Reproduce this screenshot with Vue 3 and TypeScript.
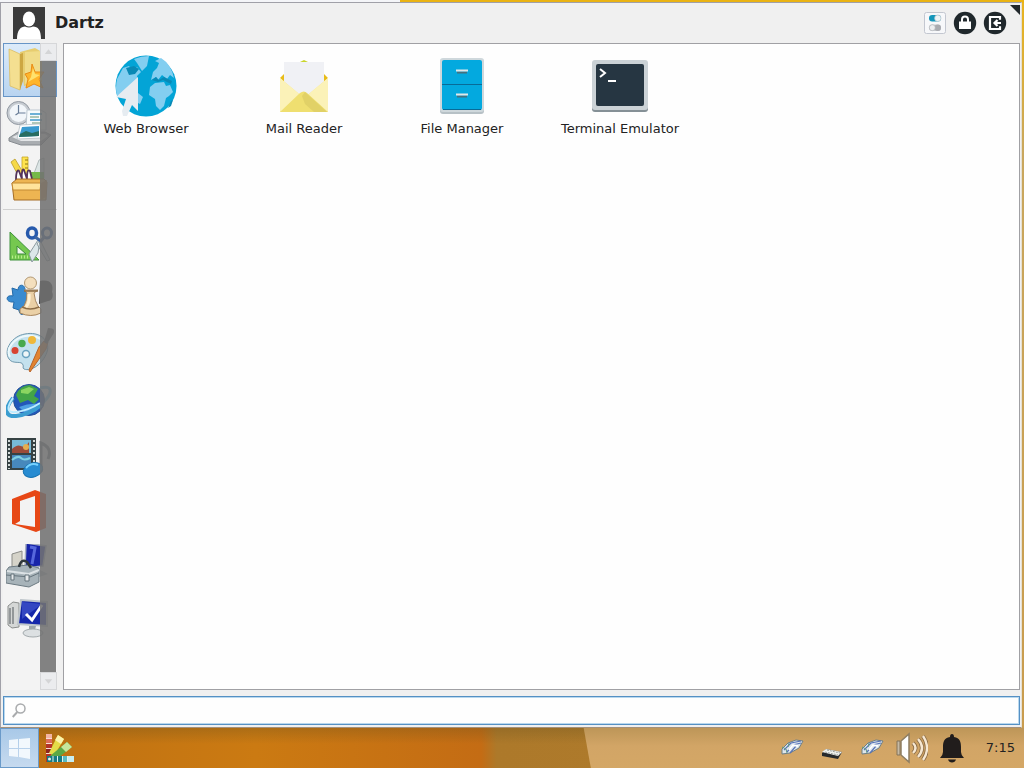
<script setup lang="ts">
import { ref } from 'vue'

const apps: { id: string; label: string }[] = [
  { id: 'web', label: 'Web Browser' },
  { id: 'mail', label: 'Mail Reader' },
  { id: 'files', label: 'File Manager' },
  { id: 'term', label: 'Terminal Emulator' },
]
const categories: { id: string; label: string }[] = [
  { id: 'favorites', label: 'Favorites' },
  { id: 'recent', label: 'Recently Used' },
  { id: 'all', label: 'All Applications' },
  { id: 'accessories', label: 'Accessories' },
  { id: 'games', label: 'Games' },
  { id: 'graphics', label: 'Graphics' },
  { id: 'internet', label: 'Internet' },
  { id: 'multimedia', label: 'Multimedia' },
  { id: 'office', label: 'Office' },
  { id: 'settings', label: 'Settings' },
  { id: 'system', label: 'System' },
]
const selected = ref('favorites')
const query = ref('')
</script>

<template>
  <div class="desktop">
    <section class="menu">
      <header class="head">
        <svg class="avatar" viewBox="0 0 32 32" aria-hidden="true">
          <rect width="32" height="32" fill="#3b3b3b" />
          <ellipse cx="16" cy="12" rx="6.2" ry="7.5" fill="#fff" />
          <path d="M4 32C4 23 8 19.500 12 19.500q4 2 8 0C25 19.500 28 23 28 32Z" fill="#fff" />
        </svg>
        <h1 class="user">Dartz</h1>
        <div class="actions">
          <button class="act" aria-label="Settings">
            <svg viewBox="0 0 24 24">
              <rect x="1.500" y="1.500" width="21" height="21" rx="2" fill="#f7f8fa" stroke="#c3c7d0" />
              <rect x="6" y="4" width="12" height="6.500" rx="3.200" fill="#1596ba" />
              <circle cx="14.800" cy="7.200" r="3.200" fill="#eef3f5" stroke="#a9bcc4" stroke-width=".6" />
              <rect x="6" y="13.500" width="12" height="6.500" rx="3.200" fill="#c9ccd0" />
              <circle cx="14.800" cy="16.700" r="3.200" fill="#a9abb0" />
              <circle cx="9.300" cy="16.700" r="3" fill="#eceef0" stroke="#a8abb0" stroke-width=".6" />
            </svg>
          </button>
          <button class="act" aria-label="Lock screen">
            <svg viewBox="0 0 24 24">
              <circle cx="12" cy="12" r="11.200" fill="#20282c" />
              <path d="M9 12V8.500a3 3 0 0 1 6 0V12" fill="none" stroke="#fff" stroke-width="2" />
              <rect x="6" y="10.500" width="12" height="7.500" fill="#fff" />
            </svg>
          </button>
          <button class="act" aria-label="Log out">
            <svg viewBox="0 0 24 24">
              <circle cx="12" cy="12" r="11.200" fill="#20282c" />
              <path d="M17 8.800V6H7v12h10v-2.800" fill="none" stroke="#fff" stroke-width="2.200" />
              <path d="M18 12h-6M14.500 9l-3 3 3 3" fill="none" stroke="#fff" stroke-width="2.200" />
            </svg>
          </button>
        </div>
        <svg class="grip" viewBox="0 0 10 10" aria-hidden="true"><path d="M0 0H10V10Z" fill="#22282c" /></svg>
      </header>

      <div class="main">
        <nav class="side" aria-label="Categories">
          <template v-for="c in categories" :key="c.id">
            <hr v-if="c.id === 'accessories'" class="rule" />
            <button class="cat" :class="{ on: selected === c.id }" :aria-label="c.label" @click="selected = c.id">
              <svg viewBox="0 0 48 48">
                <g v-if="c.id === 'favorites'">
                  <path d="M14 6 29 2l7 4v30l-18 4Z" fill="#e7cd70" />
                  <path d="M19 6 36 5v29l-17 4Z" fill="#f0dc8a" />
                  <path d="M3 3 14 8v36L4 40Z" fill="#f4df91" stroke="#d8b85a" stroke-width=".7" />
                  <path d="m14 8 3-1v28l-3 9Z" fill="#cda742" />
                  <path d="m26 18 3 8h9l-5 7 4 9-9-4-8 4 2-9-3-5 6-2Z" fill="#ffb52b" stroke="#e98b16" />
                  <path d="m27 22 2 6 5 1-5 3-7 4 3-5Z" fill="#ffe16d" />
                </g>
                <g v-else-if="c.id === 'recent'">
                  <circle cx="12.500" cy="13" r="11.500" fill="#c6cbd1" stroke="#9299a2" />
                  <circle cx="12.500" cy="13" r="9" fill="#f2f6fa" />
                  <path d="M12.500 5v8h7M12.500 13l-3 2" fill="none" stroke="#687d98" stroke-width="1.200" />
                  <path d="M21 10h14l5 3v17H20Z" fill="#f7fafc" stroke="#bcc7d0" />
                  <path d="M24 14h12M24 20h12" stroke="#6db0d6" stroke-width="2" />
                  <path d="M24 17h9M26 23h9" stroke="#6b9675" />
                  <path d="m3 38 9-6h27l6 3-10 10H15L3 41Z" fill="#a9adb1" stroke="#868b90" />
                  <path d="m6 37 7-3h26l3 2-7 5H15Z" fill="#e3e5e7" />
                  <path d="m14 25 20-1 1 14-24 1Z" fill="#fff" stroke="#aeb8c0" stroke-width=".7" />
                  <path d="m16 27 17-1v10l-20 1Z" fill="#3a9ad0" />
                  <path d="m14 34 6-3 6 2 7-2v5l-20 1Z" fill="#276d62" />
                </g>
                <g v-else-if="c.id === 'all'">
                  <path d="m5 8 4-3 9 15-5 3Z" fill="#f5d949" stroke="#ba9d2d" stroke-width=".8" />
                  <path d="M16 3h6v20h-6Z" fill="#ffe44f" stroke="#c4a523" stroke-width=".8" />
                  <path d="M19 6h3M19 10h3M19 14h3" stroke="#8b761b" />
                  <path d="m27 22 6-16 5-2v20Z" fill="#dce5e5" stroke="#97a4a4" stroke-width=".7" />
                  <path d="M23 18h15v7H23Z" fill="#75b949" />
                  <path d="M10 26c0-9 2-11 3-9l3 8c-1-7 1-11 2-9l3 9c0-8 1-10 3-8l2 8" fill="#fff" stroke="#53335a" stroke-width="1.800" />
                  <path d="m6 29 5-4h27l3 3-1 18H8Z" fill="#edb552" stroke="#a56d25" />
                  <path d="M6 29h29l-1 7H7Z" fill="#ffe39b" stroke="#c38b35" />
                  <path d="m35 29 6-3-1 17-5 3Z" fill="#d18d36" />
                </g>
                <g v-else-if="c.id === 'accessories'">
                  <path d="M4 12v28h29Z" fill="#75c84f" stroke="#3f923c" />
                  <path d="M11 26v8h9Z" fill="#eef5eb" stroke="#3b8a38" />
                  <path d="M6 37h22" stroke="#b6ee8b" stroke-width="3" stroke-dasharray="1 2" />
                  <path d="m32 20-9 14 3 8 6-9 2-13Zm2 0 10 20-3 1-10-17Z" fill="#dce7ea" stroke="#8b9a9f" />
                  <ellipse cx="26" cy="13" rx="4.500" ry="5" fill="none" stroke="#275aac" stroke-width="3.500" />
                  <ellipse cx="41" cy="13" rx="4.500" ry="5" fill="none" stroke="#275aac" stroke-width="3" />
                  <path d="m29 17 6 4 4-5" fill="none" stroke="#3c65a3" stroke-width="3" />
                </g>
                <g v-else-if="c.id === 'games'">
                  <path d="M34 7c10-2 14 3 12 11 2 4 0 9-4 9l-9 3Z" fill="#343536" />
                  <path d="m6 14 6 2c0-7 8-6 7 1l6 2v6c-5 0-5 5 0 4v7l-6-1c2 6-6 8-6 1l-6-2 1-6c-9 1-9-8-1-6Z" fill="#398bd0" stroke="#246aa9" />
                  <circle cx="24.500" cy="9" r="6" fill="#f4dfbd" stroke="#b29872" />
                  <path d="M18 16h14l-4 3q1 9 4 13l3 3v4q-10 5-21 0v-4l4-3q3-5 3-13Z" fill="#ead0a6" stroke="#a7865e" />
                  <path d="M18 17h14M16 33q8 4 17 0" fill="none" stroke="#8c6d47" stroke-width="1.500" />
                  <path d="M23 20q1 9-3 13" fill="none" stroke="#fff1d3" stroke-width="3" />
                </g>
                <g v-else-if="c.id === 'graphics'">
                  <path d="M17 37c-1-5-10 0-14-6C-3 22 6 8 19 6c14-3 26 6 22 18-4 12-16 20-23 17-2-1 0-3-1-4Z" fill="#c4e1ee" stroke="#7199ae" />
                  <path d="M4 29C-1 20 9 10 19 8c7-1 15 1 19 6" fill="none" stroke="#edf8fb" stroke-width="2" />
                  <circle cx="20" cy="26" r="3.500" fill="#eff6f8" stroke="#69a2c0" stroke-width="1.500" />
                  <circle cx="9" cy="22.500" r="3.500" fill="#d74332" /><circle cx="16" cy="15.500" r="3.700" fill="#48a94d" />
                  <circle cx="26" cy="12" r="4" fill="#efb83a" />
                  <path d="m24 44-1-2 10-23 5-6 4 1-2 7Z" fill="#e18431" stroke="#b7632a" />
                  <path d="m38 14 4-14q10 0 4 8l-5 8Z" fill="#606367" />
                </g>
                <g v-else-if="c.id === 'internet'">
                  <path d="M34 6q12-3 10 5-2 6-11 13" fill="none" stroke="#75c4e9" stroke-width="3" />
                  <circle cx="23" cy="18" r="15.500" fill="#2357b9" stroke="#265398" />
                  <path d="M10 13Q14 3 24 3l8 4-4 7 5 3-5 5-6-4-8 3Z" fill="#43a447" />
                  <path d="m15 8 8-3 5 2-6 5-7-1Z" fill="#8bd561" />
                  <path d="M13 25q10-4 20-3l-3 7-9 4Z" fill="#4e9fe3" />
                  <path d="M7 16C-2 27-1 35 10 34c8-1 18-5 25-11" fill="none" stroke="#3b9dd0" stroke-width="4" />
                  <path d="M7 16C0 26 1 31 10 30c8-1 15-3 24-9" fill="none" stroke="#bcebff" stroke-width="2" />
                </g>
                <g v-else-if="c.id === 'multimedia'">
                  <path d="M1 2h29v32H1Z" fill="#364244" />
                  <path d="M3 4v29M28 4v29" stroke="#d3dad9" stroke-width="2" stroke-dasharray="2 2" />
                  <path d="M6 4h19v13H6Z" fill="#77bad6" /><path d="M6 19h19v13H6Z" fill="#4788bc" />
                  <path d="M6 13q5-5 9-3t8-4v11H6Z" fill="#9b4b39" />
                  <circle cx="20" cy="11" r="3" fill="#e4ae50" />
                  <path d="M6 24q6-5 9-2t9 0" fill="none" stroke="#7fd0e2" stroke-width="2" />
                  <path d="M35 36V7q12 5 7 16" fill="none" stroke="#717d86" stroke-width="3" />
                  <ellipse cx="27" cy="34" rx="10" ry="7" transform="rotate(-20 27 34)" fill="#278bd1" stroke="#1773b2" />
                  <path d="M20 32q5-6 12-3" fill="none" stroke="#75d1ff" stroke-width="2" />
                </g>
                <g v-else-if="c.id === 'office'">
                  <path fill-rule="evenodd" d="M6 9 29 0l11 4v34l-10 4L6 34ZM14 11v20l-5 3 20 3V6Z" fill="#e74715" />
                </g>
                <g v-else-if="c.id === 'settings'">
                  <path d="m20-1 20 3-3 20-18 2Z" fill="#1724a9" stroke="#a8b1c2" stroke-width="1.500" />
                  <path d="m24 3 5 1-3 16" fill="none" stroke="#5668dc" stroke-width="3" />
                  <path d="m6 10 10-3v17H6Z" fill="#d5d3c9" stroke="#8b8c88" />
                  <path d="m30 24 12 6-9 3Z" fill="#b8c2cc" />
                  <path d="m3 23 19-2 11 3v14L23 43 0 39V27Z" fill="#a7b3b9" stroke="#6c7a82" />
                  <path d="m1 27 22 3 10-4" fill="none" stroke="#dce2e5" stroke-width="2" />
                  <path d="m0 31 24 2 9-4" fill="none" stroke="#66747c" />
                  <path d="M13 23q2-9 8-5l4 6" fill="none" stroke="#30383c" stroke-width="2.500" />
                  <path d="M5 30h3v6H5ZM19 31h4v6h-4Z" fill="#e5e8ea" stroke="#66747c" />
                </g>
                <g v-else>
                  <path d="m2 8 5-4 6 1v24l-7 1-4-3Z" fill="#d5d7d6" stroke="#8b8e8d" />
                  <path d="M4 10v16M7 9v17" stroke="#7d8385" stroke-width="1.500" />
                  <path d="m15 2 26 2v24l-29-2Z" fill="#1527aa" stroke="#bfc6cb" stroke-width="2" />
                  <path d="m16 4 20 2-20 15Z" fill="#4e62d5" opacity=".55" />
                  <path d="m20 16 6 6L36 7" fill="none" stroke="#fff" stroke-width="3" />
                  <path d="M23 28h7l-1 4h-6Z" fill="#9ca5aa" /><ellipse cx="27" cy="35" rx="10" ry="4" fill="#dce0e2" stroke="#a3aaad" />
                </g>
              </svg>
            </button>
          </template>
          <div class="scroll">
            <button class="step" aria-label="Scroll up"><svg viewBox="0 0 16 16"><path d="m4 10 4-5 4 5Z" fill="#d4d5d6" /></svg></button>
            <div class="trough"></div>
            <button class="step" aria-label="Scroll down"><svg viewBox="0 0 16 16"><path d="m4 6 4 5 4-5Z" fill="#d4d5d6" /></svg></button>
          </div>
        </nav>

        <main class="grid">
          <button v-for="a in apps" :key="a.id" class="app">
            <svg viewBox="0 0 64 64" aria-hidden="true">
              <g v-if="a.id === 'web'">
                <circle cx="32" cy="32" r="30.500" fill="#03a4d6" />
                <g fill="#83cef0">
                  <path d="M20 5q7-3 15-3l-2 10-5 5-5-8Z" />
                  <path d="m3 25 6-11 6-2 3 4 5-3 4 5-4 4 1 5-5 3-6 5-8 6-2 1q-2-8 0-17Z" />
                  <path d="m24 39 5 4-3 7-2-1Z" />
                  <path d="m37 26 2-8 4-4 2-5-4-2 6-3q10 6 13 20l-4-3-3 4-5-4-4 5-2-3Z" />
                  <path d="m36 33 5-4 9-1 2 4 4-1 3 7-4 4-3 2-2 8-4 4-4-4-1-7-6-4Z" />
                </g>
                <path d="m12 14 8-2 5 3-4 5-6 1ZM38 26l4-3 3 3 5-3 8 4-1 3-8-4-5 2ZM54 54l3-7 2-1-2 6Z" fill="#0989b5" />
                <path d="m24 23-22 20 10 2-4 12 1 5h4l5-11 6 6Z" fill="#e6ecf1" />
              </g>
              <g v-else-if="a.id === 'mail'">
                <path d="m28 8 4-2 4 2Z" fill="#c9d52b" /><path d="m12 20-4 4 4 4ZM52 20l4 4-4 4Z" fill="#e8bc19" />
                <path d="M12 8h40v38H12Z" fill="#f0f1f5" />
                <path d="m8 24 24 20 24-20v34H8Z" fill="#f9e98d" />
                <path d="m8 24 24 20L8 58Z" fill="#fbf2b8" /><path d="m56 24-24 20 24 14Z" fill="#fbf2b8" />
                <path d="m8 58 20-19q4-3 7 0l21 19Z" fill="#efdf70" /><path d="m33 38 22 20H42l-9-8-3-8Z" fill="#d8ca63" opacity=".65" />
              </g>
              <g v-else-if="a.id === 'files'">
                <rect x="10" y="5" width="44" height="55" rx="3" fill="#b7c1c6" />
                <rect x="10" y="4" width="44" height="54" rx="3" fill="#cfd8dc" />
                <rect x="12" y="6" width="40" height="50" rx="2" fill="#03a9df" />
                <path d="M12 30.500h40M13 55.500h38" stroke="#086b98" />
                <path d="M27 18.500h10M27 42.500h10" stroke="#45717f" stroke-width="2" />
                <path d="M26 16.500h12M26 40.500h12" stroke="#e1e7e9" stroke-width="2" />
              </g>
              <g v-else>
                <rect x="4" y="8" width="56" height="50" rx="3" fill="#859096" />
                <rect x="4" y="6" width="56" height="50" rx="3" fill="#cbd2d6" />
                <rect x="8" y="10" width="48" height="42" rx="2" fill="#263642" />
                <path d="m12 15 5 4-5 4" fill="none" stroke="#fff" stroke-width="2" />
                <path d="M20 27h8" stroke="#fff" stroke-width="2" />
              </g>
            </svg>
            <span>{{ a.label }}</span>
          </button>
        </main>
      </div>

      <label class="search">
        <svg viewBox="0 0 16 16" aria-hidden="true">
          <circle cx="8.500" cy="5.500" r="4.500" fill="none" stroke="#a9abad" stroke-width="1.500" />
          <path d="m5.300 9-4.600 5" stroke="#a9abad" stroke-width="2" />
        </svg>
        <input v-model="query" type="text" aria-label="Search applications" />
      </label>
    </section>

    <footer class="bar">
      <button class="start" aria-label="Applications menu">
        <svg viewBox="0 0 24 24"><path d="m1 4 9-1v9H1Zm10-1 11-1v10H11ZM1 13h9v8l-9-1Zm10 0h11v10l-11-2Z" fill="#f2f8fd" /></svg>
      </button>
      <button class="swatch" aria-label="Theme colors">
        <svg viewBox="0 0 30 30">
          <path d="M1 1h6v28H1Z" fill="#b43328" /><path d="M1 1h6v4H1Z" fill="#f3b4a4" /><path d="M1 6h6v4H1Z" fill="#dc6c59" /><path d="M1 16h6v4H1Z" fill="#8e251e" />
          <path d="M1 5.500h6M1 10.500h6M1 15.500h6M1 20.500h6" stroke="#f9ddd4" />
          <path d="m13 2 6 4L9 23l-5-3Z" fill="#e4dd49" /><path d="m13 2 6 4-3 5-6-4Z" fill="#fbf4ad" />
          <path d="m22 9 5 5L9 28l-4-5Z" fill="#5ba845" /><path d="m22 9 5 5-6 5-5-5Z" fill="#c6e69b" />
          <path d="M2 23h27v6H2Z" fill="#167b81" /><path d="M23 23h6v6h-6Z" fill="#c7edf1" /><path d="M18 23h4v6h-4Z" fill="#58bbc3" />
          <path d="M8 23v6M12.500 23v6M17.500 23v6M22.500 23v6" stroke="#e0f2f0" />
          <circle cx="4.500" cy="26" r="1.500" fill="#eee" />
        </svg>
      </button>
      <div class="tray">
        <button class="ti" aria-label="Network">
          <svg viewBox="0 0 24 24"><path d="m2 13 6-6 8-3 7 1-4 7-9 5-8 1Z" fill="#dfe7eb" stroke="#6c7e87" /><path d="m4 14 7-7 10-2M7 16l6-7 8-2M10 17l6-7" fill="none" stroke="#5672b8" stroke-width="1.200" /><path d="m2 11 4 2 1 4M9 7l-1 4" fill="none" stroke="#5f9781" /><path d="m9 14 4-5 5 1" fill="none" stroke="#fff" stroke-width="2" /></svg>
        </button>
        <button class="ti" aria-label="Keyboard">
          <svg viewBox="0 0 24 24"><path d="m2 17 4-4 16 3-4 7-16-3Z" fill="#26292b" /><path d="m2 16 4-3 16 3-4 4Z" fill="#f0f2ef" /><path d="m5 16 13 3M7 14l13 3" stroke="#9ba19d" stroke-dasharray="2 1" /></svg>
        </button>
        <button class="ti" aria-label="Network adapter">
          <svg viewBox="0 0 24 24"><path d="m2 13 6-6 8-3 7 1-4 7-9 5-8 1Z" fill="#dfe7eb" stroke="#6c7e87" /><path d="m4 14 7-7 10-2M7 16l6-7 8-2M10 17l6-7" fill="none" stroke="#5672b8" stroke-width="1.200" /><path d="m2 11 4 2 1 4M9 7l-1 4" fill="none" stroke="#5f9781" /><path d="m9 14 4-5 5 1" fill="none" stroke="#fff" stroke-width="2" /></svg>
        </button>
        <button class="ti big" aria-label="Volume">
          <svg viewBox="0 0 32 32"><path d="M1 9h3v14H1Z" fill="#c6baa5" stroke="#837359" /><path d="m5 9 8-7v28l-8-7Z" fill="#fff" stroke="#8e7e62" stroke-width="1.500" /><path d="M17 11q5 5 0 10M22 7q8 9 0 18M27 4q8 12 0 24" fill="none" stroke="#8a6c47" stroke-width="4" /><path d="M17 11q5 5 0 10M22 7q8 9 0 18M27 4q8 12 0 24" fill="none" stroke="#f7e8d2" stroke-width="2.400" /></svg>
        </button>
        <button class="ti big" aria-label="Notifications">
          <svg viewBox="0 0 32 32"><path d="M16 2q2 0 2 3c6 1 7 5 7 10v5q0 3 3 6H4q3-3 3-6v-5c0-5 1-9 7-10q0-3 2-3ZM12 27.500h8q-1 3-4 3t-4-3Z" fill="#211d1c" /></svg>
        </button>
        <time class="clock">7:15</time>
      </div>
    </footer>
  </div>
</template>

<style>
body { margin: 0; }
</style>

<style scoped>
* { box-sizing: border-box; }
button { margin: 0; padding: 0; border: 0; background: none; font: inherit; color: inherit; }
svg { display: block; }
.desktop {
  display: flex;
  flex-direction: column;
  height: 100vh;
  padding-top: 2px;
  overflow: hidden;
  background: linear-gradient(90deg, #f4f5f8 39.1%, #eab313 39.1%) top / 100% 3px no-repeat, linear-gradient(#e9b41d, #c9a75e 20%, #c99b4c);
  font-family: "DejaVu Sans", sans-serif;
  color: #222;
}
.menu {
  flex: 1;
  min-height: 0;
  display: flex;
  flex-direction: column;
  margin-right: 2px;
  padding: 0 1px 2px 2px;
  border: 1px solid #a0a0a8;
  border-bottom-color: #a5917b;
  border-right-color: #e6e0d2;
  background: #f0f0f0;
}
.head { position: relative; display: flex; align-items: center; height: 40px; padding: 0 13px 0 10px; }
.avatar { width: 32px; height: 32px; }
.user { flex: 1; margin: 0 0 0 10px; font-size: 16px; line-height: 20px; font-weight: 700; }
.actions { display: flex; gap: 6px; }
.act, .act svg { width: 24px; height: 24px; }
.grip { position: absolute; top: 2px; right: 0; width: 10px; height: 10px; }
.main { flex: 1; min-height: 0; display: flex; gap: 6px; }
.side { position: relative; width: 54px; overflow: hidden; background: #f3f3f3; }
.cat { display: block; width: 54px; height: 54px; padding: 2px; border: 1px solid transparent; }
.cat svg { width: 48px; height: 48px; }
.cat.on { border-color: #6795c7; background: linear-gradient(#dcebfa, #b9d4f0); }
.rule { height: 1px; margin: 4px 0 7px; border: 0; background: #d0d0d0; }
.scroll { position: absolute; top: 0; bottom: 0; right: 0; width: 17px; display: flex; flex-direction: column; }
.step { height: 18px; border: 1px solid #d6d7d9; background: #ebecee; }
.step svg { width: 15px; height: 16px; }
.trough { flex: 1; margin-right: 1px; background: rgba(114, 114, 114, 0.88); }
.grid {
  flex: 1;
  display: grid;
  grid-template-columns: repeat(auto-fill, 158px);
  align-content: start;
  padding: 10px 3px;
  border: 1px solid #a0a0a4;
  background: #fefefe;
}
.app { display: flex; flex-direction: column; align-items: center; gap: 3px; font-size: 13px; line-height: 16px; }
.app svg { width: 64px; height: 64px; }
.search {
  display: flex;
  align-items: center;
  height: 29px;
  margin-top: 6px;
  padding: 0 8px;
  gap: 8px;
  border: 1px solid #5590c4;
  box-shadow: inset 0 0 0 1px #b9d8ee;
  background: #fefefe;
}
.search svg { width: 16px; height: 16px; }
.search input { flex: 1; min-width: 0; border: 0; outline: 0; padding: 0; background: transparent; font: 13px/16px "DejaVu Sans", sans-serif; }
.bar {
  position: relative;
  display: flex;
  align-items: center;
  height: 40px;
  background: linear-gradient(rgba(100, 80, 30, 0.3), transparent 40%), linear-gradient(90deg, #bd7012, #cb7a12 25%, #c46c14 47%, #ad792a 48.500%, #ae7a2b 60%);
}
.bar::before {
  content: "";
  position: absolute;
  inset: 0;
  clip-path: polygon(57% 0, 100% 0, 100% 100%, 57.700% 100%);
  background: linear-gradient(#bd9658, #d2a566 45%, #d4a766);
}
.start {
  position: relative;
  width: 39px;
  height: 40px;
  padding: 0 7px;
  border: 1px solid #6a9ac9;
  background: linear-gradient(#a9c9e8, #c6daef);
}
.start svg { width: 24px; height: 24px; }
.swatch { position: relative; margin-left: 6px; }
.swatch svg { width: 30px; height: 30px; }
.tray { position: relative; flex: 1; display: flex; align-items: center; justify-content: flex-end; gap: 16px; padding-right: 9px; }
.ti svg { width: 24px; height: 24px; }
.big svg { width: 32px; height: 32px; }
.big { margin-left: -4px; }
.big + .big { margin-left: -8px; }
.clock { font-size: 13px; line-height: 16px; margin-left: 2px; }
</style>
